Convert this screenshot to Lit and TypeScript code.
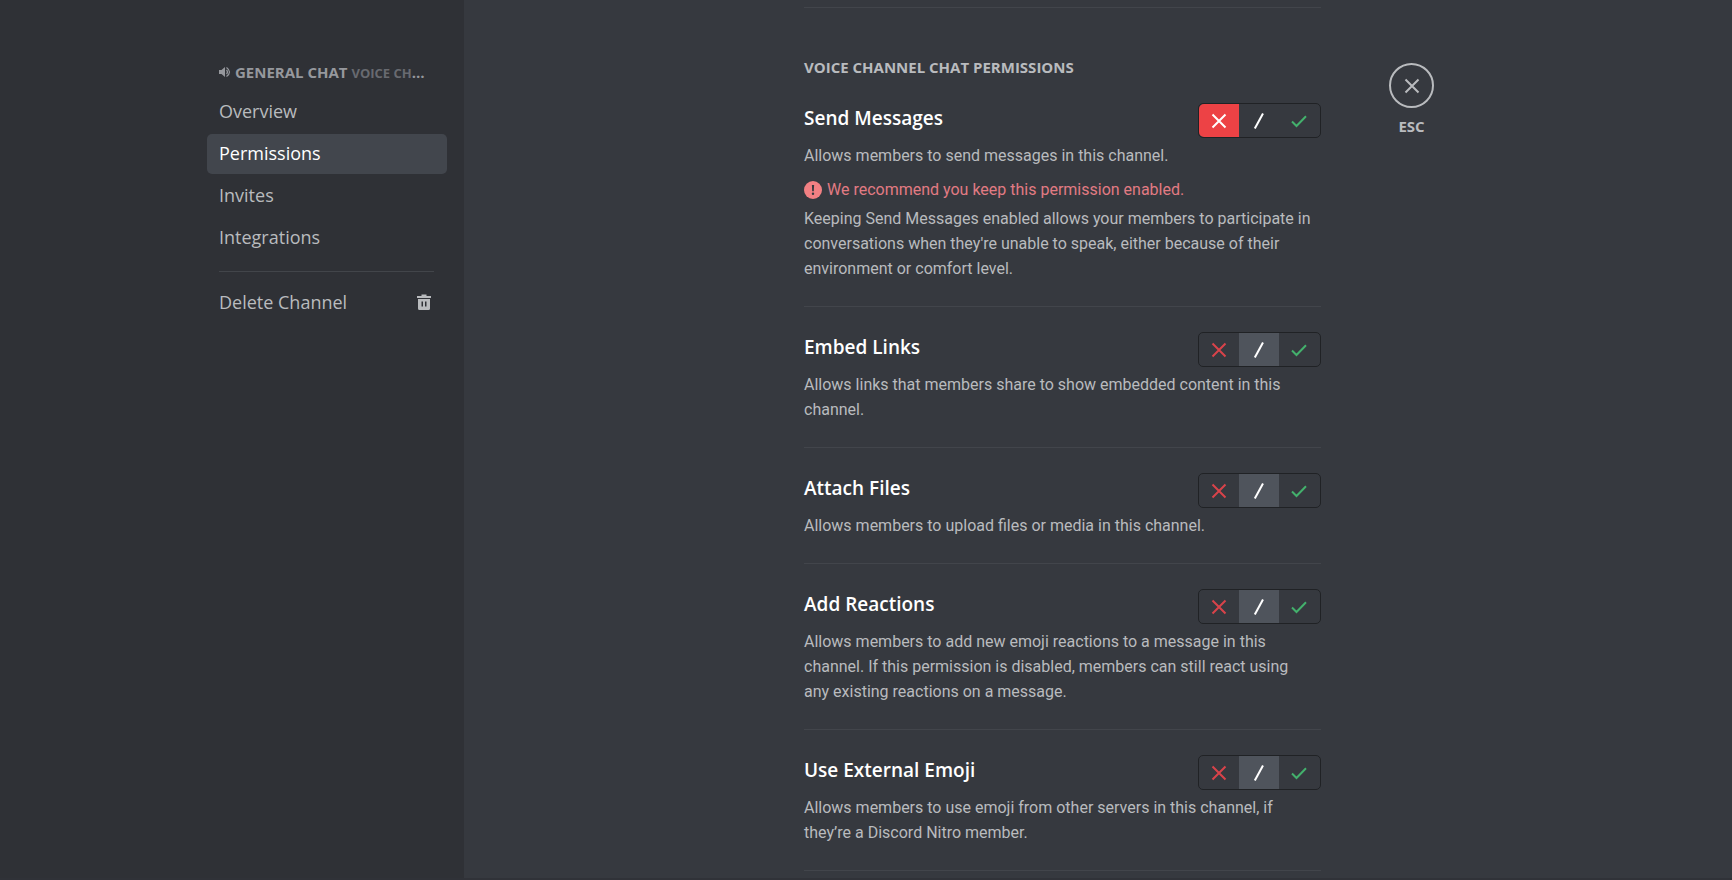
import { LitElement, html, svg, css, nothing } from "lit";
import { customElement, property, state } from "lit/decorators.js";
import { classMap } from "lit/directives/class-map.js";

type Choice = "deny" | "inherit" | "allow";

interface Permission {
  id: string;
  title: string;
  text: string;
  value: Choice;
  warning?: string;
  detail?: string;
}

const PERMISSIONS: Permission[] = [
  {
    id: "send-messages",
    title: "Send Messages",
    text: "Allows members to send messages in this channel.",
    value: "deny",
    warning: "We recommend you keep this permission enabled.",
    detail:
      "Keeping Send Messages enabled allows your members to participate in conversations when they're unable to speak, either because of their environment or comfort level.",
  },
  {
    id: "embed-links",
    title: "Embed Links",
    text: "Allows links that members share to show embedded content in this channel.",
    value: "inherit",
  },
  {
    id: "attach-files",
    title: "Attach Files",
    text: "Allows members to upload files or media in this channel.",
    value: "inherit",
  },
  {
    id: "add-reactions",
    title: "Add Reactions",
    text: "Allows members to add new emoji reactions to a message in this channel. If this permission is disabled, members can still react using any existing reactions on a message.",
    value: "inherit",
  },
  {
    id: "external-emoji",
    title: "Use External Emoji",
    text: "Allows members to use emoji from other servers in this channel, if they’re a Discord Nitro member.",
    value: "inherit",
  },
];

const CHOICES: { value: Choice; label: string; shape: unknown }[] = [
  { value: "deny", label: "Deny", shape: svg`<path d="M3.5 3.5 16.5 16.5M16.5 3.5 3.5 16.5" />` },
  { value: "inherit", label: "Inherit", shape: svg`<path d="M5.800 17.500 14 2.500" />` },
  { value: "allow", label: "Allow", shape: svg`<path d="M3 10.500 7.500 15 17 5.200" />` },
];

@customElement("permission-toggle")
export class PermissionToggle extends LitElement {
  @property() name = "";
  @property() label = "";
  @property() value: Choice = "inherit";

  static styles = css`
    :host {
      display: block;
      flex: none;
    }
    .group {
      display: flex;
      margin: 0;
      padding: 0 1px 0 0;
      height: 33px;
      border: 1px solid #202225;
      border-radius: 5px;
      overflow: hidden;
    }
    .option {
      position: relative;
      display: grid;
      place-items: center;
      width: 40px;
      cursor: pointer;
    }
    .option input {
      position: absolute;
      inset: 0;
      margin: 0;
      opacity: 0;
      cursor: pointer;
    }
    .option svg {
      width: 20px;
      height: 20px;
      fill: none;
      stroke: currentColor;
      stroke-width: 2;
    }
    .deny {
      color: #d8434a;
    }
    .inherit {
      color: #ffffff;
    }
    .allow {
      color: #43b06c;
    }
    .deny.on {
      background: #ed4245;
      color: #ffffff;
    }
    .inherit.on {
      background: #4f545c;
    }
    .allow.on {
      background: #3ba55d;
      color: #ffffff;
    }
  `;

  render() {
    return html`
      <fieldset class="group" aria-label=${this.label}>
        ${CHOICES.map(
          (c) => html`
            <label class=${classMap({ option: true, [c.value]: true, on: this.value === c.value })}>
              <input
                type="radio"
                name=${this.name}
                aria-label=${c.label}
                .checked=${this.value === c.value}
                @change=${() => (this.value = c.value)}
              />
              <svg viewBox="0 0 20 20" aria-hidden="true">${c.shape}</svg>
            </label>
          `
        )}
      </fieldset>
    `;
  }
}

@customElement("app-root")
export class AppRoot extends LitElement {
  @state() private current = "Permissions";

  static styles = css`
    :host {
      display: grid;
      grid-template-columns: minmax(260px, 464fr) 1268fr;
      box-sizing: border-box;
      height: 100vh;
      overflow: hidden;
      border-bottom: 2px solid #303238;
      background: #36393f;
      color: #b9bbbe;
      font: 16px/25px Roboto, "Open Sans", sans-serif;
    }
    .sidebar {
      display: flex;
      justify-content: flex-end;
      padding: 61px 17px 0 0;
      background: #2f3136;
      font-family: "Open Sans", sans-serif;
    }
    .menu {
      width: 240px;
      display: flex;
      flex-direction: column;
      gap: 2px;
    }
    .channel {
      margin: 0 16px 6px 12px;
      overflow: hidden;
      white-space: nowrap;
      text-overflow: ellipsis;
      text-transform: uppercase;
      font-size: 15px;
      line-height: 22px;
      font-weight: 700;
      color: #96989d;
    }
    .channel svg {
      width: 12px;
      height: 12px;
      margin-right: 4px;
    }
    .category {
      font-size: 13px;
      font-weight: 700;
      color: #686a70;
    }
    .item {
      display: flex;
      align-items: center;
      justify-content: space-between;
      box-sizing: border-box;
      height: 40px;
      padding: 0 13px 2px 12px;
      border: 0;
      border-radius: 5px;
      background: none;
      color: #b9bbbe;
      font: inherit;
      font-size: 18px;
      text-decoration: none;
      cursor: pointer;
    }
    .item.active {
      background: #42464d;
      color: #ffffff;
      font-weight: 500;
    }
    .item svg {
      width: 20px;
      height: 20px;
    }
    .rule {
      width: auto;
      height: 1px;
      margin: 11px 13px 9px 12px;
      border: 0;
      background: #42454a;
    }
    .main {
      display: grid;
      grid-template-columns: minmax(0, 340px) minmax(320px, 517px) auto 1fr;
      align-items: start;
      min-width: 0;
    }
    .content {
      grid-column: 2;
      padding-top: 7px;
    }
    .section {
      border-top: 1px solid #42454b;
      padding-top: 49px;
    }
    .heading {
      margin: 0 0 26px;
      font-family: "Open Sans", sans-serif;
      font-size: 15px;
      line-height: 20px;
      font-weight: 700;
      text-transform: uppercase;
    }
    .permission {
      padding-bottom: 25px;
      margin-bottom: 25px;
      border-bottom: 1px solid #42454b;
    }
    .top {
      display: flex;
      justify-content: space-between;
      margin-bottom: 5px;
    }
    .title {
      margin: 0;
      font-family: "Open Sans", sans-serif;
      font-size: 19px;
      line-height: 30px;
      font-weight: 600;
      color: #ffffff;
    }
    .text {
      margin: 0;
      padding-right: 6px;
    }
    .warning {
      display: flex;
      align-items: center;
      gap: 5px;
      margin: 9px 0 4px;
      color: #e27b83;
    }
    .warning svg {
      width: 18px;
      height: 18px;
    }
    .close {
      display: flex;
      flex-direction: column;
      align-items: center;
      gap: 8px;
      margin: 63px 0 0 68px;
      padding: 0;
      border: 0;
      background: none;
      color: #b9bbbe;
      font-family: "Open Sans", sans-serif;
      font-size: 15px;
      line-height: 20px;
      font-weight: 700;
      cursor: pointer;
    }
    .ring {
      display: grid;
      place-items: center;
      box-sizing: border-box;
      width: 45px;
      height: 45px;
      border: 2px solid #b9bbbe;
      border-radius: 50%;
    }
    .ring svg {
      width: 16px;
      height: 16px;
      fill: none;
      stroke: currentColor;
      stroke-width: 2;
    }
  `;

  private navItem(name: string) {
    const active = this.current === name;
    return html`<a
      class=${classMap({ item: true, active })}
      href="#${name.toLowerCase()}"
      aria-current=${active ? "page" : nothing}
      @click=${() => (this.current = name)}
      >${name}</a
    >`;
  }

  private permission(p: Permission) {
    return html`
      <article class="permission">
        <div class="top">
          <h3 class="title">${p.title}</h3>
          <permission-toggle name=${p.id} label=${p.title} value=${p.value}></permission-toggle>
        </div>
        <p class="text">${p.text}</p>
        ${p.warning
          ? html`<p class="warning">
              <svg viewBox="0 0 18 18" aria-hidden="true">
                <circle cx="9" cy="9" r="9" fill="#f28083" />
                <path d="M7.900 4h2.200l-.3 6.200H8.200z" fill="#36393f" />
                <circle cx="9" cy="12.700" r="1.200" fill="#36393f" />
              </svg>
              ${p.warning}
            </p>`
          : nothing}
        ${p.detail ? html`<p class="text">${p.detail}</p>` : nothing}
      </article>
    `;
  }

  render() {
    return html`
      <aside class="sidebar">
        <nav class="menu" aria-label="Channel settings">
          <div class="channel">
            <svg viewBox="0 0 12 12" aria-hidden="true">
              <path d="M0 4v4h2.500L6 11V1L2.500 4z" fill="currentColor" />
              <path d="M7.500 4q2 2 0 4M7.500 1.500q6 4.500 0 9" fill="none" stroke="currentColor" stroke-width="1.200" />
            </svg>General Chat <span class="category">Voice Channels</span>
          </div>
          ${["Overview", "Permissions", "Invites", "Integrations"].map((n) => this.navItem(n))}
          <hr class="rule" />
          <button class="item" type="button">
            Delete Channel
            <svg viewBox="0 0 20 20" fill="currentColor" aria-hidden="true">
              <path d="M3 4h4.500V2.500h5V4H17v2H3z" />
              <path fill-rule="evenodd" d="M4 7h12v9.500q0 1.500-1.500 1.500h-9Q4 18 4 16.500zM7.500 9.500v5H9v-5zM11 9.500v5h1.500v-5z" />
            </svg>
          </button>
        </nav>
      </aside>
      <main class="main">
        <div class="content">
          <section class="section">
            <h2 class="heading">Voice Channel Chat Permissions</h2>
            ${PERMISSIONS.map((p) => this.permission(p))}
          </section>
        </div>
        <button class="close" type="button" aria-label="Close, ESC">
          <span class="ring">
            <svg viewBox="0 0 16 16" aria-hidden="true"><path d="M1.500 1.500 14.500 14.500M14.500 1.500 1.500 14.500" /></svg>
          </span>
          ESC
        </button>
      </main>
    `;
  }
}
